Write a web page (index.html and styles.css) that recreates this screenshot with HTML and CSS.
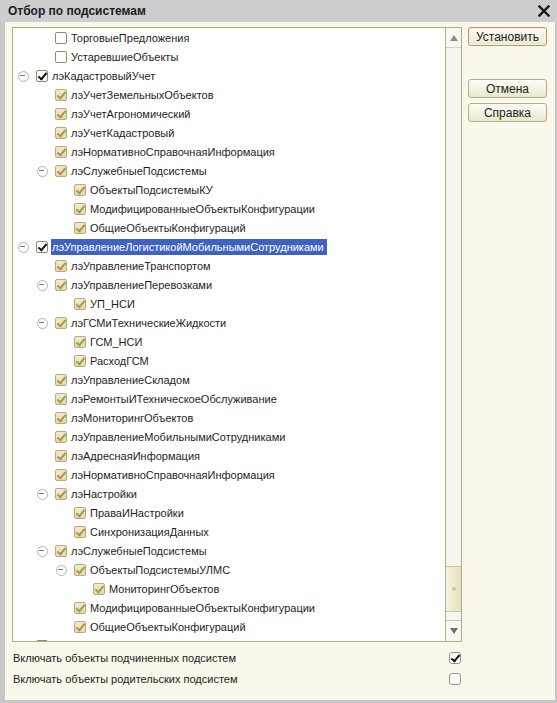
FILE: index.html
```html
<!DOCTYPE html>
<html lang="ru">
<head>
<meta charset="utf-8">
<title>Отбор по подсистемам</title>
<link rel="stylesheet" href="styles.css">
</head>
<body>
<div class="titlebar">
  <span class="title">Отбор по подсистемам</span>
  <svg class="close" width="12" height="12" viewBox="0 0 12 12"><path d="M1.5 1.5 L10.5 10.5 M10.5 1.5 L1.5 10.5" stroke="#1a1a1a" stroke-width="2.4" stroke-linecap="square"/></svg>
</div>
<div class="window">
  <div class="main">
    <div class="tree">
      <div class="list">
        <div class="row l1"><span class="exp"></span><span class="cb"></span><span class="txt">ТорговыеПредложения</span></div>
        <div class="row l1"><span class="exp"></span><span class="cb"></span><span class="txt">УстаревшиеОбъекты</span></div>
        <div class="row l0"><span class="exp minus"></span><span class="cb on"></span><span class="txt">лэКадастровыйУчет</span></div>
        <div class="row l1"><span class="exp"></span><span class="cb g"></span><span class="txt">лэУчетЗемельныхОбъектов</span></div>
        <div class="row l1"><span class="exp"></span><span class="cb g"></span><span class="txt">лэУчетАгрономический</span></div>
        <div class="row l1"><span class="exp"></span><span class="cb g"></span><span class="txt">лэУчетКадастровый</span></div>
        <div class="row l1"><span class="exp"></span><span class="cb g"></span><span class="txt">лэНормативноСправочнаяИнформация</span></div>
        <div class="row l1"><span class="exp minus"></span><span class="cb g"></span><span class="txt">лэСлужебныеПодсистемы</span></div>
        <div class="row l2"><span class="exp"></span><span class="cb g"></span><span class="txt">ОбъектыПодсистемыКУ</span></div>
        <div class="row l2"><span class="exp"></span><span class="cb g"></span><span class="txt">МодифицированныеОбъектыКонфигурации</span></div>
        <div class="row l2"><span class="exp"></span><span class="cb g"></span><span class="txt">ОбщиеОбъектыКонфигураций</span></div>
        <div class="row l0 sel"><span class="exp minus"></span><span class="cb on"></span><span class="txt">лэУправлениеЛогистикойМобильнымиСотрудниками</span></div>
        <div class="row l1"><span class="exp"></span><span class="cb g"></span><span class="txt">лэУправлениеТранспортом</span></div>
        <div class="row l1"><span class="exp minus"></span><span class="cb g"></span><span class="txt">лэУправлениеПеревозками</span></div>
        <div class="row l2"><span class="exp"></span><span class="cb g"></span><span class="txt">УП_НСИ</span></div>
        <div class="row l1"><span class="exp minus"></span><span class="cb g"></span><span class="txt">лэГСМиТехническиеЖидкости</span></div>
        <div class="row l2"><span class="exp"></span><span class="cb g"></span><span class="txt">ГСМ_НСИ</span></div>
        <div class="row l2"><span class="exp"></span><span class="cb g"></span><span class="txt">РасходГСМ</span></div>
        <div class="row l1"><span class="exp"></span><span class="cb g"></span><span class="txt">лэУправлениеСкладом</span></div>
        <div class="row l1"><span class="exp"></span><span class="cb g"></span><span class="txt">лэРемонтыИТехническоеОбслуживание</span></div>
        <div class="row l1"><span class="exp"></span><span class="cb g"></span><span class="txt">лэМониторингОбъектов</span></div>
        <div class="row l1"><span class="exp"></span><span class="cb g"></span><span class="txt">лэУправлениеМобильнымиСотрудниками</span></div>
        <div class="row l1"><span class="exp"></span><span class="cb g"></span><span class="txt">лэАдреснаяИнформация</span></div>
        <div class="row l1"><span class="exp"></span><span class="cb g"></span><span class="txt">лэНормативноСправочнаяИнформация</span></div>
        <div class="row l1"><span class="exp minus"></span><span class="cb g"></span><span class="txt">лэНастройки</span></div>
        <div class="row l2"><span class="exp"></span><span class="cb g"></span><span class="txt">ПраваИНастройки</span></div>
        <div class="row l2"><span class="exp"></span><span class="cb g"></span><span class="txt">СинхронизацияДанных</span></div>
        <div class="row l1"><span class="exp minus"></span><span class="cb g"></span><span class="txt">лэСлужебныеПодсистемы</span></div>
        <div class="row l2"><span class="exp minus"></span><span class="cb g"></span><span class="txt">ОбъектыПодсистемыУЛМС</span></div>
        <div class="row l3"><span class="exp"></span><span class="cb g"></span><span class="txt">МониторингОбъектов</span></div>
        <div class="row l2"><span class="exp"></span><span class="cb g"></span><span class="txt">МодифицированныеОбъектыКонфигурации</span></div>
        <div class="row l2"><span class="exp"></span><span class="cb g"></span><span class="txt">ОбщиеОбъектыКонфигураций</span></div>
        <div class="row l0"><span class="exp"></span><span class="cb"></span><span class="txt"></span></div>
      </div>
      <div class="scroll">
        <div class="sbtn up"><span class="arr-up"></span></div>
        <div class="track big"></div>
        <div class="thumb"><span class="grip"></span></div>
        <div class="track small"></div>
        <div class="sbtn down"><span class="arr-down"></span></div>
      </div>
    </div>
    <div class="buttons">
      <div class="btn default">Установить</div>
      <div class="btn cancel">Отмена</div>
      <div class="btn help">Справка</div>
    </div>
  </div>
  <div class="options">
    <div class="opt"><span>Включать объекты подчиненных подсистем</span><span class="cb on"></span></div>
    <div class="opt"><span>Включать объекты родительских подсистем</span><span class="cb"></span></div>
  </div>
</div>
</body>
</html>
```

FILE: styles.css
```css
* { box-sizing: border-box; }
html, body { margin: 0; padding: 0; }
body {
  width: 557px;
  height: 703px;
  overflow: hidden;
  background: #c7c7c7;
  font-family: "Liberation Sans", Arial, sans-serif;
  font-size: 11px;
  color: #1e1e1e;
}
.titlebar {
  height: 22px;
  display: flex;
  align-items: center;
  justify-content: space-between;
  padding: 0 7px 0 8px;
  background: #cdcdcd;
}
.title {
  font-weight: bold;
  font-size: 12px;
  color: #1b1b25;
}
.close { display: block; }
.window {
  margin-left: 5px;
  width: 550px;
  height: 678px;
  background: #faf8ea;
  padding: 5px 0 0 7px;
}
.main {
  display: flex;
  align-items: flex-start;
  gap: 6px;
}
.tree {
  width: 450px;
  height: 615px;
  border: 1px solid #b3aa86;
  background: #fff;
  display: flex;
  overflow: hidden;
}
.list {
  flex: 1;
  overflow: hidden;
}
.row {
  height: 19px;
  display: flex;
  align-items: center;
  white-space: nowrap;
}
.l1 { padding-left: 19px; }
.l2 { padding-left: 38px; }
.l3 { padding-left: 57px; }
.exp {
  width: 19px;
  height: 19px;
  flex: none;
  position: relative;
}
.exp.minus::before {
  content: "";
  position: absolute;
  left: 5px;
  top: 5px;
  width: 9px;
  height: 9px;
  border: 1px solid #b2b2b2;
  border-radius: 50%;
  background: #fff;
}
.exp.minus::after {
  content: "";
  position: absolute;
  left: 7px;
  top: 9px;
  width: 5px;
  height: 1px;
  background: #7a7a7a;
}
.cb {
  width: 12px;
  height: 12px;
  margin-left: 4px;
  flex: none;
  position: relative;
  border: 1px solid #8e8a74;
  border-radius: 2px;
  background: #fff;
}
.cb.g {
  background: linear-gradient(#f1ebcc, #e4daaa);
  border-color: #b8ab77;
}
.cb.on::after, .cb.g::after {
  content: "";
  position: absolute;
  left: 3px;
  top: 0px;
  width: 3px;
  height: 7px;
  border: solid #151515;
  border-width: 0 2px 2px 0;
  transform: rotate(40deg);
}
.cb.g::after { border-color: #a8975a; }
.txt {
  margin-left: 3px;
  padding: 0 3px 0 1px;
  line-height: 16px;
}
.sel .txt {
  background: #3e62c2;
  color: #fff;
}
.scroll {
  width: 16px;
  flex: none;
  border-left: 1px solid #b3aa86;
  background: #f7f6ee;
  display: flex;
  flex-direction: column;
}
.sbtn {
  display: flex;
  align-items: center;
  justify-content: center;
  background: #f8f7f0;
}
.sbtn.up { height: 20px; border-bottom: 1px solid #d6d0b6; }
.sbtn.down { height: 21px; border-top: 1px solid #cfc8aa; }
.arr-up {
  width: 0; height: 0;
  border-left: 4px solid transparent;
  border-right: 4px solid transparent;
  border-bottom: 6px solid #8c8c8c;
}
.arr-down {
  width: 0; height: 0;
  border-left: 4px solid transparent;
  border-right: 4px solid transparent;
  border-top: 6px solid #6e6e6e;
}
.track.big { height: 518px; }
.track.small { height: 8px; }
.thumb {
  height: 46px;
  border-top: 1px solid #cbc3a1;
  border-bottom: 1px solid #cbc3a1;
  background: linear-gradient(90deg, #f6f3e1, #e6e0bf);
  display: flex;
  align-items: center;
  justify-content: center;
}
.grip {
  width: 4px;
  height: 4px;
  border-radius: 50%;
  background: #c8c4b0;
}
.buttons {
  width: 79px;
  display: flex;
  flex-direction: column;
}
.btn {
  height: 19px;
  border: 1px solid #b6ad8a;
  border-radius: 3px;
  background: linear-gradient(#fefdf7, #ece7cd);
  display: flex;
  align-items: center;
  justify-content: center;
  color: #222;
  font-size: 12px;
}
.btn.default { border-color: #a79e78; box-shadow: inset 0 0 0 1px #f4f0dc; }
.btn.cancel { margin-top: 33px; }
.btn.help { margin-top: 5px; }
.options {
  width: 449px;
  margin-top: 5px;
  padding-left: 1px;
}
.opt {
  height: 21px;
  display: flex;
  align-items: center;
  justify-content: space-between;
  color: #222;
}
.opt .cb {
  border-color: #9a9377;
  border-radius: 3px;
}
```
